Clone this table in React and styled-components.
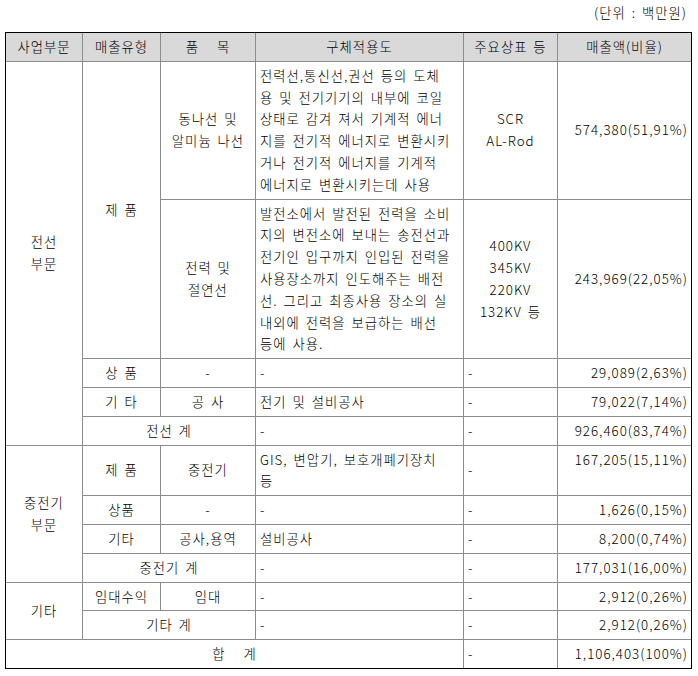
import React from 'react';
import styled, { createGlobalStyle, css } from 'styled-components';

const Global = createGlobalStyle`
  html, body { margin: 0; padding: 0; background: #fff; }
  body {
    font-family: "Noto Sans CJK KR", "Noto Sans", sans-serif;
    color: #000;
  }
`;

const Page = styled.div`
  width: 687px;
  margin-left: 5px;
  font-size: 13.33px;
  font-weight: 300;
  letter-spacing: 1px;
  word-spacing: 2px;
`;

const Unit = styled.div`
  height: 32px;
  box-sizing: border-box;
  padding: 3px 5px 0 0;
  line-height: 20px;
  text-align: right;
`;

const Table = styled.table`
  border-collapse: separate;
  border-spacing: 0;
  table-layout: fixed;
  width: 687px;
  border: 1px solid #000;
`;

const Col = styled.col`
  width: ${(p) => p.$w}px;
`;

const cellBase = css`
  padding: 3px 4px;
  line-height: 21.8px;
  font-weight: 300;
  white-space: pre;
  border-right: ${(p) => (p.$last ? 'none' : '1px solid #8c8c8c')};
  border-bottom: ${(p) => (p.$end ? 'none' : '1px solid #8c8c8c')};
  text-align: ${(p) => p.$align || 'center'};
  vertical-align: ${(p) => p.$valign || 'middle'};
`;

const Head = styled.th`
  ${cellBase};
  background: #d9d9d9;
`;

const Cell = styled.td`
  ${cellBase};
`;

const Amount = styled.td`
  ${cellBase};
  text-align: right;
  padding-right: 3px;
  border-right: none;
`;

const Lines = ({ items }) =>
  items.map((t, i) => (
    <React.Fragment key={i}>
      {i > 0 && <br />}
      {t}
    </React.Fragment>
  ));

const use1 = [
  '전력선,통신선,권선 등의 도체',
  '용 및 전기기기의 내부에 코일',
  '상태로 감겨 져서 기계적 에너',
  '지를 전기적 에너지로 변환시키',
  '거나 전기적 에너지를 기계적',
  '에너지로 변환시키는데 사용',
];

const use2 = [
  '발전소에서 발전된 전력을 소비',
  '지의 변전소에 보내는 송전선과',
  '전기인 입구까지 인입된 전력을',
  '사용장소까지 인도해주는 배전',
  '선. 그리고 최종사용 장소의 실',
  '내외에 전력을 보급하는 배선',
  '등에 사용.',
];

export default function App() {
  return (
    <Page>
      <Global />
      <Unit>(단위 : 백만원)</Unit>
      <Table>
        <colgroup>
          <Col $w={77} />
          <Col $w={78} />
          <Col $w={95} />
          <Col $w={208} />
          <Col $w={94} />
          <Col $w={133} />
        </colgroup>
        <thead>
          <tr>
            <Head>사업부문</Head>
            <Head>매출유형</Head>
            <Head>품   목</Head>
            <Head>구체적용도</Head>
            <Head>주요상표 등</Head>
            <Head $last>매출액(비율)</Head>
          </tr>
        </thead>
        <tbody>
          <tr>
            <Cell rowSpan={5}>
              <Lines items={['전선', '부문']} />
            </Cell>
            <Cell rowSpan={2}>제 품</Cell>
            <Cell>
              <Lines items={['동나선 및', '알미늄 나선']} />
            </Cell>
            <Cell $align="left">
              <Lines items={use1} />
            </Cell>
            <Cell>
              <Lines items={['SCR', 'AL-Rod']} />
            </Cell>
            <Amount>574,380(51,91%)</Amount>
          </tr>
          <tr>
            <Cell>
              <Lines items={['전력 및', '절연선']} />
            </Cell>
            <Cell $align="left">
              <Lines items={use2} />
            </Cell>
            <Cell>
              <Lines items={['400KV', '345KV', '220KV', '132KV 등']} />
            </Cell>
            <Amount>243,969(22,05%)</Amount>
          </tr>
          <tr>
            <Cell>상 품</Cell>
            <Cell>-</Cell>
            <Cell $align="left">-</Cell>
            <Cell $align="left">-</Cell>
            <Amount>29,089(2,63%)</Amount>
          </tr>
          <tr>
            <Cell>기 타</Cell>
            <Cell>공 사</Cell>
            <Cell $align="left">전기 및 설비공사</Cell>
            <Cell $align="left">-</Cell>
            <Amount>79,022(7,14%)</Amount>
          </tr>
          <tr>
            <Cell colSpan={2}>전선 계</Cell>
            <Cell $align="left">-</Cell>
            <Cell $align="left">-</Cell>
            <Amount>926,460(83,74%)</Amount>
          </tr>
          <tr>
            <Cell rowSpan={4}>
              <Lines items={['중전기', '부문']} />
            </Cell>
            <Cell>제 품</Cell>
            <Cell>중전기</Cell>
            <Cell $align="left">
              <Lines items={['GIS, 변압기, 보호개폐기장치', '등']} />
            </Cell>
            <Cell $align="left">-</Cell>
            <Amount $valign="top">167,205(15,11%)</Amount>
          </tr>
          <tr>
            <Cell>상품</Cell>
            <Cell>-</Cell>
            <Cell $align="left">-</Cell>
            <Cell $align="left">-</Cell>
            <Amount>1,626(0,15%)</Amount>
          </tr>
          <tr>
            <Cell>기타</Cell>
            <Cell>공사,용역</Cell>
            <Cell $align="left">설비공사</Cell>
            <Cell $align="left">-</Cell>
            <Amount>8,200(0,74%)</Amount>
          </tr>
          <tr>
            <Cell colSpan={2}>중전기 계</Cell>
            <Cell $align="left">-</Cell>
            <Cell $align="left">-</Cell>
            <Amount>177,031(16,00%)</Amount>
          </tr>
          <tr>
            <Cell rowSpan={2}>기타</Cell>
            <Cell>임대수익</Cell>
            <Cell>임대</Cell>
            <Cell $align="left">-</Cell>
            <Cell $align="left">-</Cell>
            <Amount>2,912(0,26%)</Amount>
          </tr>
          <tr>
            <Cell colSpan={2}>기타 계</Cell>
            <Cell $align="left">-</Cell>
            <Cell $align="left">-</Cell>
            <Amount>2,912(0,26%)</Amount>
          </tr>
          <tr>
            <Cell colSpan={4} $end>
              합   계
            </Cell>
            <Cell $align="left" $end>
              -
            </Cell>
            <Amount $end>1,106,403(100%)</Amount>
          </tr>
        </tbody>
      </Table>
    </Page>
  );
}
